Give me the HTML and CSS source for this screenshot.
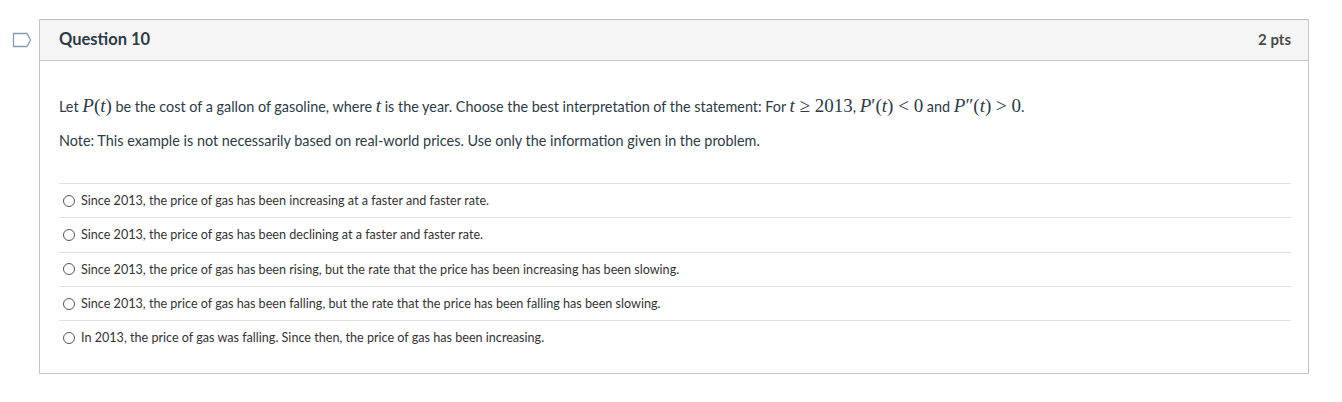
FILE: index.html
```html
<!DOCTYPE html>
<html>
<head>
<meta charset="utf-8">
<link rel="stylesheet" href="styles.css">
</head>
<body>
<div class="page">
  <div class="flag">
    <svg width="20" height="16" viewBox="0 0 20 16"><path d="M1.5 1.5 H15 L18.5 8 L15 14.5 H1.5 Z" fill="none" stroke="#8c9cb0" stroke-width="1.3"/></svg>
  </div>
  <div class="question">
    <div class="qhead">
      <span class="qtitle">Question 10</span>
      <span class="qpts">2 pts</span>
    </div>
    <div class="qbody">
      <p class="qtext">Let <span class="m"><i>P</i>(<i>t</i>)</span> be the cost of a gallon of gasoline, where <span class="m"><i>t</i></span> is the year. Choose the best interpretation of the statement: For <span class="m"><i>t</i> ≥ 2013</span>, <span class="m"><i>P</i>′(<i>t</i>) &lt; 0</span> and <span class="m"><i>P</i>″(<i>t</i>) &gt; 0</span>.</p>
      <p class="qnote">Note: This example is not necessarily based on real-world prices. Use only the information given in the problem.</p>
      <div class="answers">
        <div class="ans"><span class="radio"></span><span>Since 2013, the price of gas has been increasing at a faster and faster rate.</span></div>
        <div class="ans"><span class="radio"></span><span>Since 2013, the price of gas has been declining at a faster and faster rate.</span></div>
        <div class="ans"><span class="radio"></span><span>Since 2013, the price of gas has been rising, but the rate that the price has been increasing has been slowing.</span></div>
        <div class="ans"><span class="radio"></span><span>Since 2013, the price of gas has been falling, but the rate that the price has been falling has been slowing.</span></div>
        <div class="ans"><span class="radio"></span><span>In 2013, the price of gas was falling. Since then, the price of gas has been increasing.</span></div>
      </div>
    </div>
  </div>
</div>
</body>
</html>
```

FILE: styles.css
```css
html, body { margin: 0; padding: 0; background: #fff; }
body { font-family: Lato, "Noto Sans", sans-serif; color: #2d3b45; }
.page { display: flex; align-items: flex-start; padding: 19px 0 0 12px; }
.flag { width: 27px; padding-top: 13px; }
.flag svg { display: block; }
.question { width: 1268px; border: 1px solid #c4c4c4; border-top-color: #bcbcbc; }
.qhead { display: flex; justify-content: space-between; align-items: center; height: 41px; box-sizing: border-box; padding: 0 17px 2px 19px; background: #f5f5f5; border-bottom: 1px solid #c4c4c4; }
.qtitle { font-weight: 700; font-size: 16.5px; color: #2d3b45; }
.qpts { font-weight: 700; font-size: 15px; color: #4a4a4a; }
.qbody { padding: 32px 17px 19px 19px; }
.qtext { margin: 0; font-size: 14.4px; line-height: 26px; color: #2d3b45; }
.m { font-family: "Liberation Serif", "DejaVu Serif", serif; font-size: 19px; }
.m i { font-style: italic; }
.qnote { margin: 11px 0 0; font-size: 14.4px; line-height: 20px; color: #2d3b45; }
.answers { margin-top: 32px; }
.ans { display: flex; align-items: center; height: 33.3px; border-top: 1px solid #e2e2e2; font-size: 12.6px; color: #333; }
.radio { width: 10px; height: 10px; border: 1px solid #555; border-radius: 50%; margin: 0 6px 0 4px; flex: none; }
```
